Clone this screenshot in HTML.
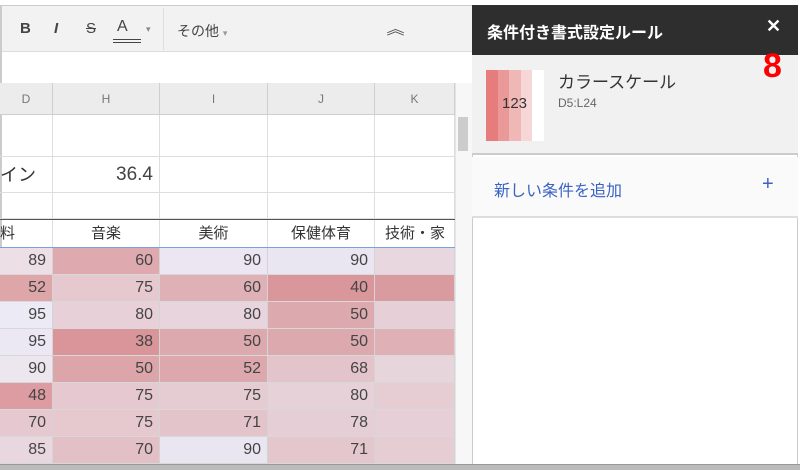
<!DOCTYPE html>
<html><head><meta charset="utf-8"><style>
*{margin:0;padding:0;box-sizing:border-box}
body{width:800px;height:470px;overflow:hidden;background:#fff;font-family:"Liberation Sans","Noto Sans CJK JP",sans-serif;position:relative;color:#333}
.a{position:absolute}
.c{position:absolute;border-right:1px solid #d4d4d4;border-bottom:1px solid #d8d8d8;font-size:16px;text-align:right;padding-right:6px;line-height:26px;color:#444}
.h{position:absolute;top:83px;height:32px;background:#ececec;border-right:1px solid #cfcfcf;border-bottom:1px solid #cfcfcf;font-size:12px;color:#777;text-align:center;line-height:32px}
.g{position:absolute;border-right:1px solid #dedede;border-bottom:1px solid #dedede}
.t{position:absolute;font-size:15px;text-align:center;line-height:28px;color:#333;border-right:1px solid #dedede}
</style></head><body>
<div class="a" style="left:0;top:5px;width:472px;height:1px;background:#ccc"></div>
<div class="a" style="left:0;top:6px;width:472px;height:46px;background:#f2f2f2;border-bottom:1px solid #ddd"></div>
<div class="a" style="left:0;top:6px;width:2px;height:460px;background:#ccc"></div>
<div class="a" style="left:163px;top:8px;width:1px;height:42px;background:#ddd"></div>
<div class="a" style="left:20px;top:20px;font-weight:bold;font-size:15px;color:#444">B</div>
<div class="a" style="left:54px;top:20px;font-style:italic;font-weight:bold;font-size:15px;color:#444">I</div>
<div class="a" style="left:86px;top:20px;text-decoration:line-through;font-size:15px;color:#444">S</div>
<div class="a" style="left:117px;top:18px;font-size:16px;color:#444">A</div>
<div class="a" style="left:113px;top:39px;width:28px;height:4px;border-top:1px solid #444;border-bottom:1px solid #444"></div>
<div class="a" style="left:146px;top:24px;font-size:9px;color:#888">▾</div>
<div class="a" style="left:177px;top:21px;font-size:14px;color:#444">その他 <span style="color:#999;font-size:9px">▾</span></div>
<div class="a" style="left:388px;top:18px;font-size:15px;color:#444;transform:scaleX(1.2)">︽</div>
<div class="h" style="left:0;width:53px">D</div>
<div class="h" style="left:53px;width:107px">H</div>
<div class="h" style="left:160px;width:108px">I</div>
<div class="h" style="left:268px;width:107px">J</div>
<div class="h" style="left:375px;width:80px">K</div>
<div class="a" style="left:455px;top:83px;width:17px;height:383px;background:#f7f7f7;border-left:1px solid #e4e4e4"></div>
<div class="a" style="left:458px;top:117px;width:10px;height:34px;background:#ccc"></div>
<div class="g" style="left:0;top:115px;width:53px;height:42px"></div><div class="g" style="left:53px;top:115px;width:107px;height:42px"></div><div class="g" style="left:160px;top:115px;width:108px;height:42px"></div><div class="g" style="left:268px;top:115px;width:107px;height:42px"></div><div class="g" style="left:375px;top:115px;width:80px;height:42px"></div>
<div class="g" style="left:0;top:157px;width:53px;height:36px;font-size:18px;line-height:36px">イン</div><div class="g" style="left:53px;top:157px;width:107px;height:36px;font-size:19px;line-height:36px;text-align:right;padding-right:6px;color:#444">36.4</div><div class="g" style="left:160px;top:157px;width:108px;height:36px"></div><div class="g" style="left:268px;top:157px;width:107px;height:36px"></div><div class="g" style="left:375px;top:157px;width:80px;height:36px"></div>
<div class="g" style="left:0;top:193px;width:53px;height:26px"></div><div class="g" style="left:53px;top:193px;width:107px;height:26px"></div><div class="g" style="left:160px;top:193px;width:108px;height:26px"></div><div class="g" style="left:268px;top:193px;width:107px;height:26px"></div><div class="g" style="left:375px;top:193px;width:80px;height:26px"></div>
<div class="a" style="left:0;top:219px;width:455px;height:1px;background:#555"></div>
<div class="t" style="left:0;top:220px;width:53px;text-align:left">料</div>
<div class="t" style="left:53px;top:220px;width:107px">音楽</div>
<div class="t" style="left:160px;top:220px;width:108px">美術</div>
<div class="t" style="left:268px;top:220px;width:107px">保健体育</div>
<div class="t" style="left:375px;top:220px;width:80px;text-align:left;padding-left:10px;white-space:nowrap;overflow:hidden">技術・家</div>
<div class="a" style="left:0;top:247px;width:455px;height:1px;background:#7b9ee6"></div>
<div id="d"></div>
<div class="a" style="left:0;top:464px;width:800px;height:6px;background:#bbb;border-top:1px solid #999"></div>
<!-- panel -->
<div class="a" style="left:472px;top:5px;width:326px;height:459px;background:#fff;border-left:1px solid #ccc;border-right:1px solid #ccc"></div>
<div class="a" style="left:472px;top:5px;width:326px;height:50px;background:#2e2e2e"></div>
<div class="a" style="left:487px;top:19px;color:#fff;font-weight:bold;font-size:16px">条件付き書式設定ルール</div>
<div class="a" style="left:766px;top:16px;color:#fff;font-weight:bold;font-size:18px">✕</div>
<div class="a" style="left:472px;top:55px;width:326px;height:100px;background:#f1f1f1;border-bottom:2px solid #ccc"></div>
<div class="a" style="left:763px;top:46px;color:#f00;font-weight:bold;font-size:34px;line-height:40px">8</div>
<div class="a" style="left:486px;top:70px;width:58px;height:71px;display:flex">
<div style="flex:1;background:#e67c7c"></div><div style="flex:1;background:#ea9898"></div><div style="flex:1;background:#f0b7b7"></div><div style="flex:1;background:#f6d6d6"></div><div style="flex:1;background:#fff"></div></div>
<div class="a" style="left:502px;top:95px;font-size:15px;color:#333">123</div>
<div class="a" style="left:558px;top:68px;font-size:17px;color:#333">カラースケール</div>
<div class="a" style="left:558px;top:96px;font-size:12px;color:#666">D5:L24</div>
<div class="a" style="left:472px;top:157px;width:326px;height:61px;background:#fafafa;border-bottom:2px solid #ddd"></div>
<div class="a" style="left:494px;top:177px;font-size:16px;color:#3a63c4">新しい条件を追加</div>
<div class="a" style="left:762px;top:173px;font-size:20px;color:#3a63c4">+</div>
<script>
var v=[[89,60,90,90,''],[52,75,60,40,''],[95,80,80,50,''],[95,38,50,50,''],[90,50,52,68,''],[48,75,75,80,''],[70,75,71,78,''],[85,70,90,71,'']];
var c=[["#ecdfe6","#deaab0","#ebe6f1","#eae6f1","#e8d7df"],["#dfa6aa","#e6c8cf","#dfb0b6","#d9979c","#da9ba0"],["#eceaf4","#e8d0d8","#e7d4dc","#dca9ae","#e6cfd6"],["#ebe8f3","#d9959a","#dca9ae","#dca9ae","#dfb0b6"],["#ece6ef","#dca5aa","#dca8ad","#e3c4cb","#e7d5dc"],["#dc9ca2","#e6c9d0","#e5ccd3","#e7d1d9","#e6cdd4"],["#e5c8d0","#e6c8cf","#e4c4cb","#e6ced6","#e6cfd6"],["#e8d7df","#e3bfc6","#eae6f1","#e4c6cd","#e6cdd4"]];
var x=[0,53,160,268,375,455],h='';
for(var r=0;r<8;r++)for(var k=0;k<5;k++)h+='<div class="c" style="left:'+x[k]+'px;top:'+(248+r*27)+'px;width:'+(x[k+1]-x[k])+'px;height:27px;background:'+c[r][k]+'">'+v[r][k]+'</div>';
document.getElementById('d').innerHTML=h;
</script>
</body></html>
